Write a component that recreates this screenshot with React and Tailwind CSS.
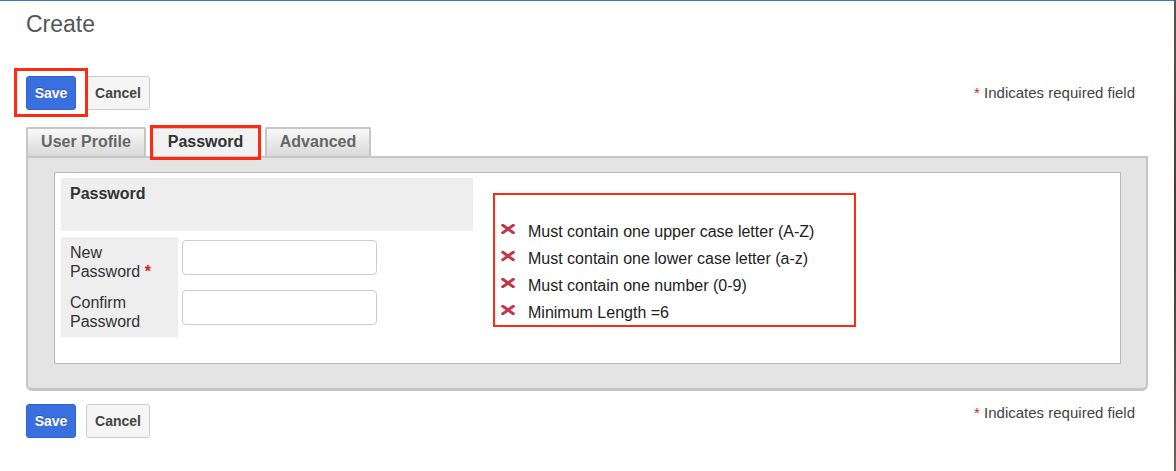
import React from 'react';

const rules = [
  'Must contain one upper case letter (A-Z)',
  'Must contain one lower case letter (a-z)',
  'Must contain one number (0-9)',
  'Minimum Length =6',
];

const XIcon = () => (
  <svg width="14" height="10" viewBox="0 0 14 10" className="mb-[5px] shrink-0">
    <path d="M1.8 1.3 L12.2 8.7 M12.2 1.3 L1.8 8.7" stroke="#c33548" strokeWidth="3" strokeLinecap="square" />
  </svg>
);

const SaveButton = ({ marked }) => (
  <div className="relative">
    <button className="h-[34px] w-[50px] rounded-[3px] border border-[#2f62d2] bg-[#3a6fe0] text-[14px] font-bold text-white [text-shadow:0_-1px_0_rgba(0,0,0,0.25)]">
      Save
    </button>
    {marked && (
      <span className="pointer-events-none absolute -left-[12px] -top-[8px] -right-[12px] -bottom-[7px] border-[3px] border-[#ff2a12]" />
    )}
  </div>
);

const CancelButton = () => (
  <button className="h-[34px] w-[64px] rounded-[3px] border border-[#cccccc] bg-[#f5f5f5] text-[14px] font-bold text-[#444]">
    Cancel
  </button>
);

const Required = () => (
  <div className="mr-[13px] text-[15px] leading-[18px] text-[#444]">
    <span className="text-[#e21b1b]">*</span> Indicates required field
  </div>
);

const Tab = ({ label, active, width }) => (
  <div className={`relative ${width}`}>
    <div
      className={`flex h-[29px] items-center justify-center rounded-t-[2px] border-2 border-b-0 border-[#c6c6c6] pb-[1px] text-[16px] font-bold ${
        active ? 'bg-[#f2f2f2] text-[#333]' : 'bg-gradient-to-b from-[#f9f9f9] to-[#d9d9d9] text-[#666]'
      }`}
    >
      {label}
    </div>
    {active && (
      <span className="pointer-events-none absolute -left-[1px] -top-[2px] -right-[1px] -bottom-[4px] border-[3px] border-[#ff2a12]" />
    )}
  </div>
);

const App = () => {
  return (
    <div className="flex h-[471px] w-[1176px] bg-white font-['Liberation_Sans',Arial,sans-serif]">
      <div className="flex-1 border-t border-[#3a78c4] px-[26px]">
        <h1 className="mt-[10px] text-[23px] leading-[26px] text-[#555]">Create</h1>

        <div className="mt-[39px] flex items-center justify-between">
          <div className="flex gap-[10px]">
            <SaveButton marked />
            <CancelButton />
          </div>
          <Required />
        </div>

        <div className="mt-[17px] flex gap-[5px]">
          <Tab label="User Profile" width="w-[120px]" />
          <Tab label="Password" active width="w-[109px]" />
          <Tab label="Advanced" width="w-[106px]" />
        </div>

        <div className="rounded-b-[6px] border-2 border-b-[3px] border-[#c6c6c6] bg-[#e4e4e4] pb-[24px] pl-[26px] pr-[25px] pt-[14px]">
          <div className="flex h-[192px] border border-[#b8b8b8] bg-white pl-[6px] pt-[5px]">
            <div className="w-[412px]">
              <div className="h-[53px] bg-[#eeeeee] pl-[9px] pt-[6px] text-[16px] font-bold leading-[19px] text-[#333]">
                Password
              </div>
              <div className="mt-[6px] grid grid-cols-[117px_auto] text-[16px] leading-[19px] text-[#333]">
                <div className="flex h-[50px] flex-col justify-center bg-[#eeeeee] pl-[9px]">
                  <span>New</span>
                  <span>
                    Password <span className="font-bold text-[#e21b1b]">*</span>
                  </span>
                </div>
                <div className="pl-[4px] pt-[3px]">
                  <input className="h-[35px] w-[195px] rounded-[4px] border border-[#cccccc] bg-white outline-none" />
                </div>
                <div className="flex h-[50px] flex-col justify-center bg-[#eeeeee] pl-[9px]">
                  <span>Confirm</span>
                  <span>Password</span>
                </div>
                <div className="pl-[4px] pt-[3px]">
                  <input className="h-[35px] w-[195px] rounded-[4px] border border-[#cccccc] bg-white outline-none" />
                </div>
              </div>
            </div>

            <div className="ml-[20px] mt-[15px] h-[134px] w-[363px] border-2 border-[#ff2a12] pl-[6px] pt-[23px]">
              {rules.map((rule) => (
                <div key={rule} className="flex h-[27px] items-center gap-[13px] text-[16px] text-[#222]">
                  <XIcon />
                  <span>{rule}</span>
                </div>
              ))}
            </div>
          </div>
        </div>

        <div className="mt-[13px] flex items-start justify-between">
          <div className="flex gap-[10px]">
            <SaveButton />
            <CancelButton />
          </div>
          <Required />
        </div>
      </div>
      <div className="w-[2px] bg-gradient-to-b from-[#5b5551] via-[#3f3b39] to-[#6a625e]" />
    </div>
  );
};

export default App;
